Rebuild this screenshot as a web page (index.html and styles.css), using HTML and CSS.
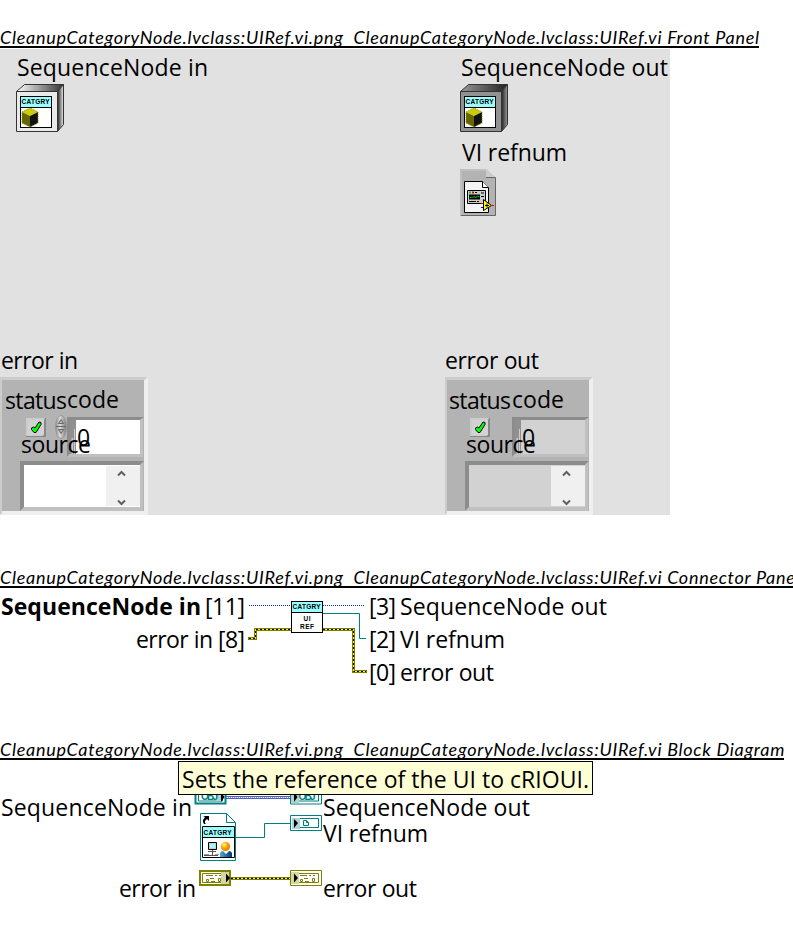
FILE: index.html
```html
<!DOCTYPE html>
<html lang="en">
<head>
<meta charset="utf-8">
<title>CleanupCategoryNode.lvclass:UIRef.vi</title>
<link rel="stylesheet" href="styles.css">
</head>
<body>
<svg class="defs" width="0" height="0" aria-hidden="true">
  <defs>
    <linearGradient id="side" x1="0" x2="1"><stop offset="0" stop-color="#222"/><stop offset="1" stop-color="#eee"/></linearGradient>
    <linearGradient id="lid" x1="0" x2="1"><stop offset="0" stop-color="#fff"/><stop offset="1" stop-color="#333"/></linearGradient>
    <linearGradient id="sideDark" x1="0" x2="1"><stop offset="0" stop-color="#222"/><stop offset="1" stop-color="#999"/></linearGradient>
    <linearGradient id="lidDark" x1="0" x2="1"><stop offset="0" stop-color="#999"/><stop offset="1" stop-color="#222"/></linearGradient>
    <linearGradient id="knob" x1="0" x2="1"><stop offset="0" stop-color="#888"/><stop offset=".4" stop-color="#ddd"/><stop offset="1" stop-color="#777"/></linearGradient>
    <radialGradient id="head" cx=".35" cy=".3"><stop offset="0" stop-color="#fff4b0"/><stop offset=".5" stop-color="#ffc020"/><stop offset="1" stop-color="#e89000"/></radialGradient>
    <linearGradient id="torso" x1="0" x2="1"><stop offset="0" stop-color="#58a8d8"/><stop offset="1" stop-color="#003878"/></linearGradient>
    <g id="plate">
      <rect x=".5" y=".5" width="31" height="31" fill="#fff" stroke="#000"/>
      <rect x="1" y="1" width="30" height="10" fill="#99ffff"/>
      <path d="M0 11.5h32" stroke="#000"/>
    </g>
    <g id="cube">
      <path d="M2 16l8-4 8 4-8 4z" fill="#cc0"/>
      <path d="M2 16l8 4v11l-8-4z" fill="#660"/>
      <path d="M18 16l-8 4v11l8-4z" fill="#111"/>
      <path d="M2 16l8-4 8 4v11l-8 4-8-4z" fill="none" stroke="#880" stroke-dasharray="1 1"/>
    </g>
    <g id="frame">
      <path d="M0 377h148v138H0z" fill="#efefef"/>
      <path d="M0 377h148l-4 4H0z" fill="#ccc"/>
      <path d="M0 377h2v136l-2 2z" fill="#ccc"/>
      <path d="M2 380h142v131H2z" fill="#b3b3b3"/>
      <path d="M148 377l-4 4v130h4z" fill="#efefef"/>
    </g>
    <g id="wells">
      <path d="M67 457v-40h77l-4 3H70v34z" fill="#8c8c8c"/>
      <path d="M67 457l3-3h70v-34l3-2v39z" fill="#c0c0c0"/>
      <path d="M70 420h6v34h-6z" fill="#909090"/>
      <path d="M71.500 454v-16h1.500v16zM74 454v-25h1v25z" fill="#ccc"/>
      <path d="M20 511v-50h124l-4 4H24v42z" fill="#8c8c8c"/>
      <path d="M20 511l4-4h116v-42l3-3v49z" fill="#c0c0c0"/>
    </g>
    <g id="scroll">
      <path d="M106 466h34v40h-34z" fill="#f0f0f0"/>
      <path d="M118 475.5l3.500-3.500 3.500 3.500M118 500.500l3.500 3.500 3.500-3.500" fill="none" stroke="#606060" stroke-width="2"/>
    </g>
    <g id="check">
      <path d="M26 418h20v19H26z" fill="#888"/>
      <path d="M26 418h19l-1 2v15l-2 1H26z" fill="#ccc"/>
      <path d="M28 420h16v15H28z" fill="#d2d2d2"/>
      <path d="M31.500 428l2-1 1.500 1 4-6 2 .5v2l-5 8h-2l-2.500-3z" fill="#0f0" stroke="#000"/>
    </g>
    <g id="error-node" fill="none">
      <path d="M8 5.500h7M17 5.500h2M21 5.500h2M12 8.500h4" stroke="#808000"/>
      <path d="M8.500 9.500h2v2h-2zM13 11.500h4M20.500 8.500h2v3h-2z" stroke="#808000"/>
    </g>
  </defs>
</svg>

<main>
<section class="sheet">
  <h2 class="title front">CleanupCategoryNode.lvclass:UIRef.vi.png  CleanupCategoryNode.lvclass:UIRef.vi Front Panel</h2>
  <svg class="panel" width="670" height="466" viewBox="0 49 670 466">
    <text x="17" y="76" textLength="191">SequenceNode in</text>
    <text x="461" y="76" textLength="207">SequenceNode out</text>
    <text x="462" y="161" textLength="105">VI refnum</text>
    <text x="1" y="369" textLength="77">error in</text>
    <text x="445" y="369" textLength="94">error out</text>

    <g stroke="#333" stroke-linejoin="round">
      <path d="M16.500 91.500l8-7h39l-6 7z" fill="url(#lid)"/>
      <path d="M57.500 91.500l6-7v40l-6 7z" fill="url(#side)"/>
      <path d="M16.500 91.500h41v40h-41z" fill="#eaeaea"/>
      <path d="M460.500 91.500l8-7h39l-6 7z" fill="url(#lidDark)"/>
      <path d="M501.500 91.500l6-7v40l-6 7z" fill="url(#sideDark)"/>
      <path d="M460.500 91.500h41v40h-41z" fill="#929292"/>
    </g>
    <use href="#plate" x="20" y="96"/><use href="#cube" x="20" y="96"/>
    <use href="#plate" x="464" y="96"/><use href="#cube" x="464" y="96"/>
    <text class="tag" x="21.500" y="104" textLength="28">CATGRY</text>
    <text class="tag" x="465.500" y="104" textLength="28">CATGRY</text>

    <path d="M460 169h26l10 9v38h-36z" fill="#b3b3b3"/>
    <path d="M461 215v-45h25" fill="none" stroke="#ccc"/>
    <path d="M486 169l10 9h-10z" fill="#ccc"/>
    <path d="M486 177.500h9.500v38H461" fill="none" stroke="#666"/>
    <path d="M464.500 181.500h18l6 6v25h-24z" fill="#f4f4f4" stroke="#000"/>
    <path d="M482.500 181.500v6h6" fill="#fff" stroke="#000"/>
    <path d="M467.500 190.500h18v13h-18z" fill="#ccc" stroke="#000"/>
    <path d="M469 194.500h11v5h-11z" fill="#000"/>
    <path d="M469.500 198l2-1 1 1 2-2 1 2 2-2 2 1" fill="none" stroke="#0c0"/>
    <path d="M469 192.500h2" stroke="#0c0" stroke-width="2"/>
    <path d="M472 192.500h2" stroke="#e00" stroke-width="2"/>
    <path d="M475 192.500h2M481 193h3M481 196.500h3M469 201.500h7M477 201.500h2" stroke="#000"/>
    <path d="M481 203.500h3" stroke="#e00"/><path d="M481 207.500h3" stroke="#00e"/>
    <path d="M483.500 199.500v11l8-5z" fill="#ff0" stroke="#000"/>
    <path d="M491 205.500h3" stroke="#e00"/><path d="M485 205.500h4m-2-2v4" stroke="#000"/>

    <g>
      <use href="#frame"/><use href="#wells"/>
      <path d="M76 420h64v34H76zM24 465h116v42H24z" fill="#fff"/>
      <use href="#scroll"/><use href="#check"/>
      <ellipse cx="61" cy="427" rx="5.500" ry="11.500" fill="url(#knob)" stroke="#999"/>
      <path d="M58.500 423.500l2.500-4 2.500 4zM58.500 429.500l2.500 4 2.500-4zM56 426.500h10" fill="#bbb" stroke="#666"/>
      <text x="5" y="409" textLength="62">status</text>
      <text x="67" y="408" textLength="52">code</text>
      <text x="77" y="446">0</text>
      <text x="21" y="453" textLength="70">source</text>
    </g>
    <g transform="translate(445)">
      <use href="#frame"/><use href="#wells"/>
      <path d="M76 420h64v34H76zM24 465h116v42H24z" fill="#d2d2d2"/>
      <use href="#scroll"/><use href="#check" x="-1"/>
      <text x="4" y="409" textLength="62">status</text>
      <text x="67" y="408" textLength="52">code</text>
      <text x="77" y="446">0</text>
      <text x="21" y="453" textLength="70">source</text>
    </g>
  </svg>
</section>

<section class="sheet">
  <h2 class="title pane">CleanupCategoryNode.lvclass:UIRef.vi.png  CleanupCategoryNode.lvclass:UIRef.vi Connector Pane</h2>
  <svg class="pins" width="793" height="105" viewBox="0 589 793 105">
    <text class="required" x="1" y="615" textLength="200">SequenceNode in</text>
    <text x="205" y="615" textLength="40">[11]</text>
    <text x="136" y="648" textLength="77">error in</text>
    <text x="218" y="648" textLength="27">[8]</text>
    <text x="369" y="615" textLength="27">[3]</text>
    <text x="400" y="615" textLength="207">SequenceNode out</text>
    <text x="369" y="648" textLength="27">[2]</text>
    <text x="400" y="648" textLength="105">VI refnum</text>
    <text x="369" y="681" textLength="27">[0]</text>
    <text x="400" y="681" textLength="94">error out</text>
    <path d="M249 605.500h42M323 605.500h41" stroke="#0033cc" stroke-dasharray="1 1"/>
    <path d="M323 613.500h36.500v25h6.500" fill="none" stroke="#008080"/>
    <g fill="none">
      <path d="M248 638.500h7.500v-9H291M323 629.500h30.500v42H367" stroke="#808000" stroke-width="3"/>
      <path d="M249 638.500h6.500v-9H291M323 629.500h30.500v42H366" stroke="#ff0"/>
      <path d="M249 638.500h6.500v-9H291M323 629.500h30.500v42H366" stroke="#000" stroke-dasharray="2 2"/>
    </g>
    <use href="#plate" x="291" y="601"/>
    <text class="tag" x="292.500" y="609" textLength="28">CATGRY</text>
    <text class="tag" x="303.500" y="621" textLength="7">UI</text>
    <text class="tag" x="300" y="629" textLength="14">REF</text>
  </svg>
</section>

<section class="sheet">
  <h2 class="title block">CleanupCategoryNode.lvclass:UIRef.vi.png  CleanupCategoryNode.lvclass:UIRef.vi Block Diagram</h2>
  <svg width="793" height="168" viewBox="0 761 793 168">
    <text x="1" y="816" textLength="191">SequenceNode in</text>
    <text x="323" y="816" textLength="207">SequenceNode out</text>
    <text x="323" y="842" textLength="105">VI refnum</text>
    <text x="119" y="897" textLength="77">error in</text>
    <text x="323" y="897" textLength="94">error out</text>

    <path d="M195.500 789.500h30v14h-30z" fill="#fff" stroke="#008080" stroke-width="2"/>
    <path d="M198.500 791.500h24v9.500h-24zM290.500 789.500h31v14.500h-31zM293.500 791.500h25v9.500h-25z" fill="none" stroke="#008080"/>
    <path d="M216 792h6v9h-6zM291 792h8v11h-8z" fill="#b0d4d4"/>
    <text class="obj" x="201" y="800" textLength="17">OBJ</text>
    <text class="obj" x="298.500" y="800" textLength="17">OBJ</text>
    <path d="M221 792l3.500 5-3.500 5zM294 792l3.500 5-3.500 5z"/>
    <path d="M226 796.500h64M226 798.500h64" stroke="#5060c0"/><path d="M226 797.500h64" stroke="#8890d0" stroke-dasharray="1 1"/>
    <rect x="178.500" y="761.500" width="414" height="33" fill="#ffffd5" stroke="#000"/>
    <text x="182" y="788" textLength="407">Sets the reference of the UI to cRIOUI.</text>

    <path d="M200.500 813.500h26l9 9v38h-35z" fill="#fff" stroke="#008080"/>
    <path d="M226.500 813.500v9h9M236 837.500h28.500v-14H290" fill="none" stroke="#008080"/>
    <path d="M202.500 826.500h32v31h-32z" fill="#fff" stroke="#000"/>
    <path d="M203 827h31v10h-31z" fill="#99ffff"/><path d="M202 837.500h33" stroke="#000"/>
    <text class="tag" x="203.500" y="835" textLength="28">CATGRY</text>
    <path d="M203 816h6v5l-2-2-2 2v2l1 1h-2l-1-2v-2l2-3z"/>
    <path d="M208.500 842.500h8v7h-8z" fill="#ccc" stroke="#000"/><path d="M210 844h5v4h-5z" fill="#9ff"/>
    <path d="M212.500 850v6M204 855.500h14M208 851.500h8" stroke="#555"/><path d="M204 854.500h5m6 0h4" stroke="#999"/>
    <circle cx="225.500" cy="846.500" r="4.700" fill="url(#head)"/>
    <path d="M220 857v-4q1-2 3-2l3 3 3-3q2 0 3 2v4z" fill="url(#torso)"/>

    <path d="M290.500 815.500h31v15h-31zM293.500 818.500h25v9h-25z" fill="#fff" stroke="#008080"/>
    <path d="M292 818h8v11h-8z" fill="#b0d4d4"/><path d="M294 819l4 4-4 5z"/>
    <path d="M303.500 820.500h3l2 2v3h-5zM306.500 820.500v2h2" fill="none" stroke="#008080"/>

    <path d="M200 871h30v14h-30z" fill="#fff" stroke="#808000" stroke-width="2"/>
    <path d="M202.500 873.500h25v9h-25z" fill="none" stroke="#808000"/>
    <path d="M290.500 870.500h31v15h-31zM293.500 873.500h25v9h-25z" fill="#fff" stroke="#808000"/>
    <path d="M221 872h8v12h-8zM291 872h8v12h-8z" fill="#d5d5a5"/>
    <use href="#error-node" x="198" y="870"/><use href="#error-node" x="292" y="870"/>
    <path d="M226 873.500l4 4.500-4 4.500zM294 873.500l4 4.500-4 4.500z"/>
    <path d="M231 878.500h59" stroke="#808000" stroke-width="3"/><path d="M231 878.500h59" stroke="#ff0"/><path d="M231 878.500h59" stroke="#000" stroke-dasharray="2 2"/>
  </svg>
</section>
</main>
</body>
</html>
```
FILE: styles.css
```css
body { margin: 0; background: #fff; color: #000; overflow: hidden; }
main { display: flex; flex-direction: column; height: 929px; padding-top: 24px; box-sizing: border-box; }
.sheet { display: flex; flex-direction: column; align-items: flex-start; }
.sheet + .sheet { margin-top: 49px; }
.sheet:last-child { margin-top: 42px; }
.sheet svg, .defs { display: block; flex: none; }
.defs { height: 0; }
.title {
  box-sizing: border-box;
  height: 24px;
  margin: 0 0 1px;
  border-bottom: 2px solid #000;
  overflow: hidden;
  white-space: pre;
  font: italic 400 18px/27px Lato, "Open Sans", sans-serif;
  letter-spacing: .71px;
}
.front { width: 759px; }
.pane { width: 793px; }
.block { width: 784px; }
.panel { background: #e1e1e1; }
svg text { font: 23px "Open Sans", "Noto Sans", sans-serif; white-space: pre; }
svg text.required { font-weight: 700; }
svg text.tag { font: 700 6.5px "Liberation Sans", sans-serif; }
svg text.obj { font: 700 10px "Liberation Sans", sans-serif; fill: #008080; }
```
